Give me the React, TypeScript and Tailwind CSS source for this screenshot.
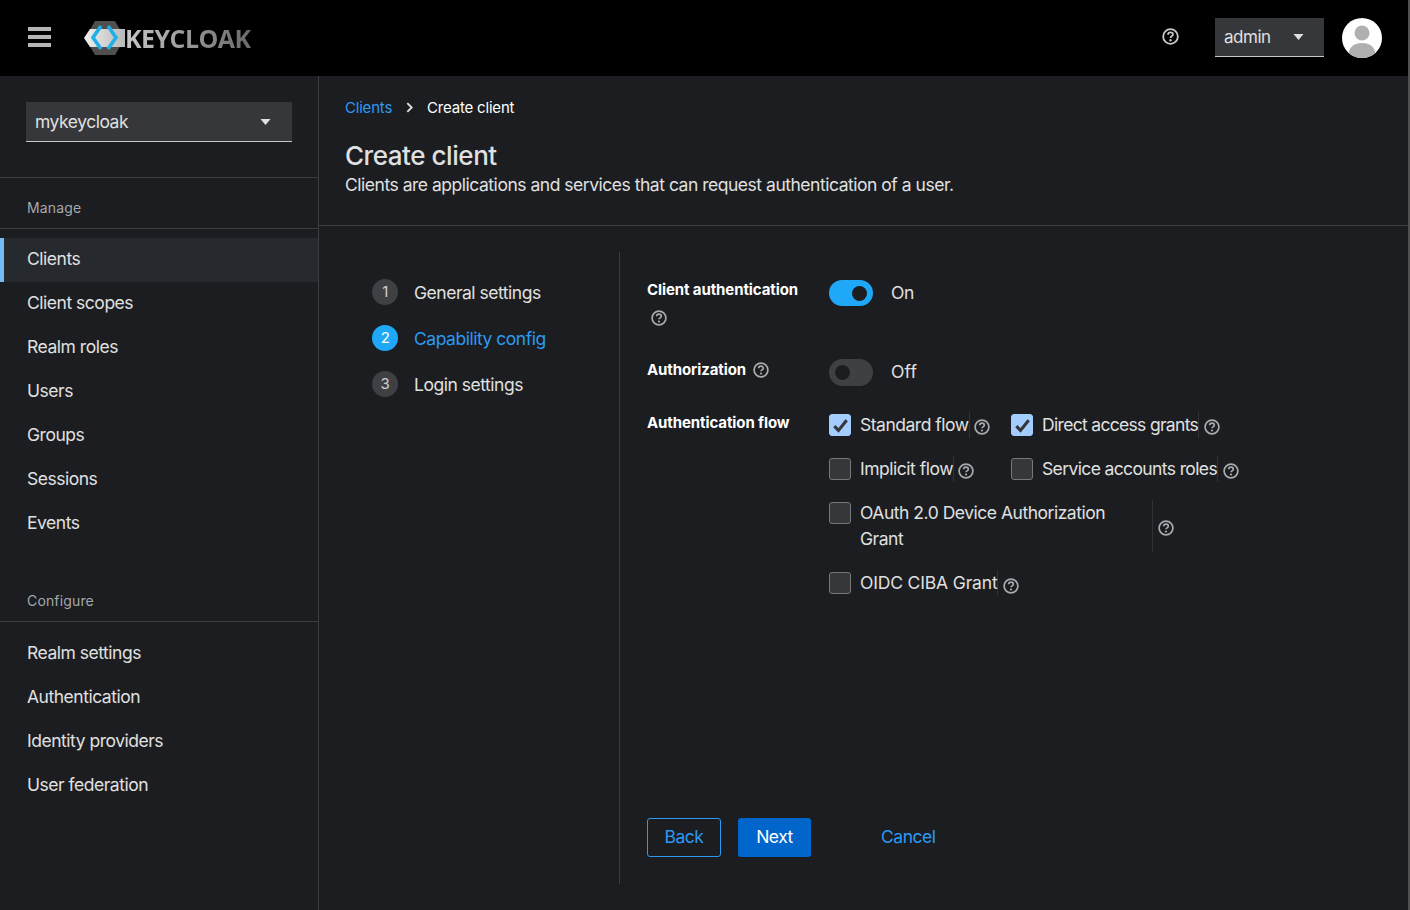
const manageItems = ["Clients", "Client scopes", "Realm roles", "Users", "Groups", "Sessions", "Events"];
const configureItems = ["Realm settings", "Authentication", "Identity providers", "User federation"];

function HelpIcon({ className }: { className: string }) {
  return (
    <svg viewBox="0 0 16 16" className={className} fill="none">
      <circle cx="8" cy="8" r="6.9" stroke="currentColor" strokeWidth="1.7" />
      <path d="M5.7 6.3c0-1.3 1-2.1 2.3-2.1s2.3.8 2.3 2c0 1.7-2.3 1.6-2.3 3.1" stroke="currentColor" strokeWidth="1.7" />
      <circle cx="8" cy="11.5" r="1.1" fill="currentColor" />
    </svg>
  );
}

function Caret() {
  return (
    <svg viewBox="0 0 10 6" className="h-[6px] w-[11px]">
      <path d="M0 0h10L5 6z" fill="#e0e0e0" />
    </svg>
  );
}

function Logo() {
  return (
    <div className="flex items-center">
      <svg viewBox="0 0 42 36" className="h-[36px] w-[42px] shrink-0">
        <defs>
          <linearGradient id="band" x1="0" y1="0" x2="1" y2="0">
            <stop offset="0" stopColor="#f0f0f0" />
            <stop offset="1" stopColor="#b8b8b8" />
          </linearGradient>
        </defs>
        <path d="M11 1h20l10 17-10 17H11L1 18z" fill="#4f4f4f" />
        <path d="M0 18l6-9h35v18H6z" fill="url(#band)" />
        <path d="M17 6L9 17.5 17 29" fill="none" stroke="#1fb0e8" strokeWidth="3.6" />
        <path d="M24 6l8 11.5L24 29" fill="none" stroke="#1fb0e8" strokeWidth="3.6" />
      </svg>
      <span className="-ml-px pt-px text-[25px] font-bold tracking-[-0.55px] bg-gradient-to-r from-[#c8c8c8] to-[#6a6a6a] bg-clip-text text-transparent font-['Open_Sans',sans-serif]">
        KEYCLOAK
      </span>
    </div>
  );
}

function Check({
  label,
  checked,
  help,
  wide,
  tracking = "",
}: {
  label: string;
  checked?: boolean;
  help: string;
  wide?: boolean;
  tracking?: string;
}) {
  return (
    <div className="flex items-start">
      <div
        className={`mt-[2px] flex h-[22px] w-[22px] shrink-0 items-center justify-center rounded-[3px] border ${
          checked ? "border-[#a3cdff] bg-[#a3cdff]" : "border-[#77787a] bg-[#36373a]"
        }`}
      >
        {checked && (
          <svg viewBox="0 0 16 16" className="h-[17px] w-[17px]">
            <path d="M2.2 8.6l3.9 4L13.8 3" fill="none" stroke="#36373a" strokeWidth="2.9" />
          </svg>
        )}
      </div>
      <span className={`ml-[9px] border-r border-[#303236] leading-[26px] ${tracking} ${wide ? "w-[293px]" : ""}`}>{label}</span>
      <HelpIcon className={`${help} h-[16px] w-[16px] shrink-0 text-[#a8abae]`} />
    </div>
  );
}

export default function App() {
  return (
    <div className="flex h-[910px] w-[1410px] flex-col overflow-hidden border-r-2 border-[#505050] bg-[#1b1d21] text-[17.5px] tracking-[-0.48px] text-[#e0e0e0] font-['Inter',sans-serif]">
      <header className="flex h-[76px] shrink-0 items-center bg-black pl-[28px] pr-[26px]">
        <svg viewBox="0 0 23 22" className="-mt-[2px] h-[22px] w-[23px] text-[#b5b5b5]">
          <path d="M0 1h23v4H0zM0 9h23v4H0zM0 17h23v4H0z" fill="currentColor" />
        </svg>
        <div className="ml-[33px]">
          <Logo />
        </div>
        <div className="ml-auto flex items-center">
          <HelpIcon className="-mt-[3px] h-[17px] w-[17px] text-[#c8c8c8]" />
          <div className="-mt-[2px] ml-[36px] flex h-[39px] w-[109px] items-center justify-between border-b border-[#c7c7c7] bg-[#36373a] pl-[9px] pr-[20px] text-[17px]">
            <span className="pt-[2px]">admin</span>
            <Caret />
          </div>
          <div className="ml-[18px] h-[40px] w-[40px] overflow-hidden rounded-full bg-white">
            <svg viewBox="0 0 40 40" className="h-full w-full">
              <circle cx="20" cy="15" r="7.5" fill="#b0b0b0" />
              <path d="M6 40c0-10 5-15 14-15s14 5 14 15z" fill="#b0b0b0" />
            </svg>
          </div>
        </div>
      </header>

      <div className="flex min-h-0 flex-1">
        <aside className="flex w-[319px] shrink-0 flex-col border-r border-[#3a3c40]">
          <div className="border-b border-[#3a3c40] px-[26px] pb-[35px] pt-[26px]">
            <div className="flex h-[40px] w-[266px] items-center justify-between border-b border-[#c7c7c7] bg-[#36373a] pl-[9px] pr-[21px]">
              <span className="pt-[2px]">mykeycloak</span>
              <Caret />
            </div>
          </div>
          <div className="flex h-[51px] items-center border-b border-[#3a3c40] pl-[27px] pt-[9px] text-[14px] tracking-[0.15px] text-[#a6a8aa]">Manage</div>
          <nav className="mt-[9px] flex flex-col">
            {manageItems.map((item) => (
              <div
                key={item}
                className={`flex h-[44px] items-center pb-[1px] ${
                  item === "Clients" ? "border-l-[4px] border-[#73bcf7] bg-[#26292d] pl-[23px]" : "pl-[27px]"
                }`}
              >
                {item}
              </div>
            ))}
          </nav>
          <div className="mt-[32px] flex h-[44px] items-center border-b border-[#3a3c40] pl-[27px] pt-[2px] text-[14px] tracking-[0.15px] text-[#a6a8aa]">Configure</div>
          <nav className="mt-[9px] flex flex-col">
            {configureItems.map((item) => (
              <div key={item} className="flex h-[44px] items-center pl-[27px]">
                {item}
              </div>
            ))}
          </nav>
        </aside>

        <main className="flex min-w-0 flex-1 flex-col">
          <div className="h-[150px] shrink-0 border-b border-[#3a3c40] pl-[26px] pt-[22px]">
            <div className="flex h-[20px] items-center text-[15px] tracking-[-0.2px]">
              <span className="text-[#2b9af3]">Clients</span>
              <svg viewBox="0 0 8 12" className="ml-[14px] mr-[14px] -mt-[2px] h-[11px] w-[7px]">
                <path d="M1.5 1l5 5-5 5" fill="none" stroke="#e0e0e0" strokeWidth="2.2" />
              </svg>
              <span className="text-white">Create client</span>
            </div>
            <h1 className="mt-[20px] text-[26px] font-medium leading-[36px] tracking-[-0.45px]">Create client</h1>
            <p className="-mt-px leading-[24px]">Clients are applications and services that can request authentication of a user.</p>
          </div>

          <div className="flex flex-1 pt-[26px]">
            <ol className="flex h-[632px] w-[301px] shrink-0 flex-col gap-[20px] border-r border-[#3a3c40] pl-[53px] pt-[27px]">
              {["General settings", "Capability config", "Login settings"].map((step, i) => (
                <li key={step} className={`flex h-[26px] items-center gap-[16px] ${i === 1 ? "text-[#2b9af3]" : ""}`}>
                  <span className={`flex h-[26px] w-[26px] items-center justify-center rounded-full text-[15px] ${i === 1 ? "bg-[#1fa7f8] text-white" : "bg-[#3f4044] text-[#d0d0d0]"}`}>
                    {i + 1}
                  </span>
                  <span className="pt-[2px]">{step}</span>
                </li>
              ))}
            </ol>

            <div className="flex h-[632px] flex-1 flex-col pl-[27px]">
              <div className="flex h-[107px] pt-[28px]">
                <div className="w-[182px] text-[15px] font-bold leading-[20px] tracking-[-0.1px] text-white">
                  Client authentication
                  <HelpIcon className="ml-[4px] mt-[10px] h-[16px] w-[16px] text-[#a8abae]" />
                </div>
                <div className="flex items-start">
                  <div className="flex h-[26px] w-[44px] items-center justify-end rounded-full bg-[#1fa7f8] pr-[6px]">
                    <span className="h-[15px] w-[15px] rounded-full bg-[#1b1d21]" />
                  </div>
                  <span className="ml-[18px] leading-[26px]">On</span>
                </div>
              </div>
              <div className="flex h-[53px] items-start">
                <div className="flex w-[182px] items-center pt-[1px] text-[15px] font-bold leading-[20px] tracking-[-0.1px] text-white">
                  Authorization
                  <HelpIcon className="ml-[7px] h-[16px] w-[16px] text-[#a8abae]" />
                </div>
                <div className="flex items-start">
                  <div className="flex h-[27px] w-[44px] items-center rounded-full bg-[#3f4044] pl-[6px]">
                    <span className="h-[15px] w-[15px] rounded-full bg-[#1b1d21]" />
                  </div>
                  <span className="ml-[18px] leading-[26px] tracking-[0.2px]">Off</span>
                </div>
              </div>
              <div className="flex">
                <div className="w-[182px] pt-px text-[15px] font-bold leading-[20px] tracking-[-0.1px] text-white">Authentication flow</div>
                <div className="flex flex-col gap-[18px]">
                  <div className="grid grid-cols-[182px_auto] gap-y-[18px]">
                    <Check label="Standard flow" checked help="ml-[4px] mt-[7px]" />
                    <Check label="Direct access grants" checked help="ml-[5px] mt-[7px]" tracking="tracking-[-0.68px]" />
                    <Check label="Implicit flow" help="ml-[4px] mt-[7px]" />
                    <Check label="Service accounts roles" help="ml-[5px] mt-[7px]" tracking="tracking-[-0.62px]" />
                  </div>
                  <Check label="OAuth 2.0 Device Authorization Grant" help="ml-[5px] mt-[20px]" wide />
                  <Check label="OIDC CIBA Grant" help="ml-[5px] mt-[8px]" tracking="tracking-[-0.16px]" />
                </div>
              </div>

              <div className="mb-[27px] mt-auto flex items-center">
                <button className="h-[39px] w-[74px] rounded-[3px] border border-[#2b9af3] text-[#2b9af3]">Back</button>
                <button className="ml-[17px] h-[39px] w-[73px] rounded-[3px] bg-[#06c] text-white">Next</button>
                <button className="ml-[70px] text-[#2b9af3]">Cancel</button>
              </div>
            </div>
          </div>
        </main>
      </div>
    </div>
  );
}
